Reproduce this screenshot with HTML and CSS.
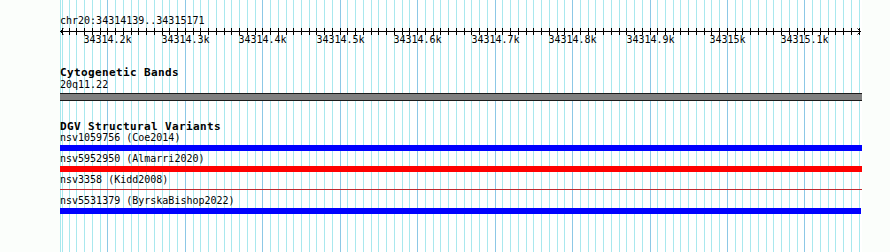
FILE: index.html
```html
<!DOCTYPE html>
<html lang="en">
<head>
    <meta charset="UTF-8">
    <title>chr20:34314139..34315171</title>
    <link rel="stylesheet" href="styles.css">
</head>
<body>
    <div class="view">
        <div class="grid"></div>
        <div class="ruler">
            <div class="location">chr20:34314139..34315171</div>
            <svg class="scale" width="802" height="7"></svg>
            <div class="ticklabels"></div>
        </div>
        <div class="track cyto">
            <div class="track-label">Cytogenetic Bands</div>
            <div class="feature-label">20q11.22</div>
            <div class="band"></div>
        </div>
        <div class="track dgv">
            <div class="track-label">DGV Structural Variants</div>
            <div class="row">
                <div class="feature-label">nsv1059756 (Coe2014)</div>
                <div class="bar gain"></div>
            </div>
            <div class="row">
                <div class="feature-label">nsv5952950 (Almarri2020)</div>
                <div class="bar loss"></div>
            </div>
            <div class="row">
                <div class="feature-label">nsv3358 (Kidd2008)</div>
                <div class="bar thin"></div>
            </div>
            <div class="row">
                <div class="feature-label">nsv5531379 (ByrskaBishop2022)</div>
                <div class="bar gain short"></div>
            </div>
        </div>
    </div>
    <script>
        // 10bp grid, 100bp major lines with labels
        const grid = document.querySelector('.grid');
        const scale = document.querySelector('.scale');
        const labels = document.querySelector('.ticklabels');
        const pxPerBp = 0.77444;

        function toX(bp){
            return Math.round(47.4 + (bp - 34314200) * pxPerBp);
        }

        let gridHtml = '<div class="line" style="left:0px"></div>';
        let svgHtml = '<rect x="0" y="3" width="801" height="1"></rect>';
        let labelHtml = '';

        for(let bp = 34314140; bp <= 34315170; bp += 10){
            let x = toX(bp);
            if(x < 2) x = 2;
            const major = bp % 100 === 0;
            gridHtml += `<div class="line${major ? ' major' : ''}" style="left:${x}px"></div>`;
            svgHtml += `<rect x="${x}" y="0" width="1" height="7"></rect>`;
            if(major){
                labelHtml += `<span style="left:${x + 0.5}px">${bp / 1000}k</span>`;
            }
        }

        svgHtml += '<path d="M3.5 0.5 L0.5 3.5 L3.5 6.5"></path>';
        svgHtml += '<path d="M797.5 0.5 L800.5 3.5 L797.5 6.5"></path>';

        grid.innerHTML = gridHtml;
        scale.innerHTML = svgHtml;
        labels.innerHTML = labelHtml;
    </script>
</body>
</html>
```

FILE: styles.css
```css
body{
    margin: 0;
    background-color: #fbfefb;
    font-family: "DejaVu Sans Mono", "Liberation Mono", monospace;
    font-size: 10px;
    color: #000;
}
.view{
    position: relative;
    margin-left: 60px;
    width: 802px;
    height: 252px;
    background-color: #fff;
    overflow: hidden;
}
.grid{
    position: absolute;
    top: 0;
    left: 0;
    right: 0;
    bottom: 0;
}
.grid .line{
    position: absolute;
    top: 0;
    bottom: 0;
    width: 1px;
    background-color: #a9e8ee;
}
.grid .line.major{
    background-color: #8cc8e6;
}
.ruler,.track{
    position: relative;
}

/* ruler */
.ruler{
    padding-top: 16px;
    height: 29px;
}
.location{
    line-height: 10px;
}
.scale{
    display: block;
    margin-top: 2px;
}
.scale rect{
    fill: #000;
}
.scale path{
    fill: none;
    stroke: #000;
    stroke-width: 1;
}
.ticklabels{
    position: relative;
    height: 10px;
    line-height: 10px;
}
.ticklabels span{
    position: absolute;
    top: 0;
    transform: translateX(-50%);
    white-space: nowrap;
}

/* tracks */
.track-label{
    font-weight: bold;
    font-size: 11px;
    letter-spacing: 0.38px;
    line-height: 12px;
}
.feature-label{
    line-height: 10px;
    white-space: nowrap;
}
.cyto{
    padding-top: 22px;
}
.cyto .feature-label{
    margin-top: 1px;
}
.band{
    box-sizing: border-box;
    height: 8px;
    margin-top: 3px;
    background-color: #808080;
    border-top: 1px solid #1a1a1a;
    border-bottom: 1px solid #1a1a1a;
}
.dgv{
    padding-top: 20px;
}
.dgv .row:first-of-type{
    margin-top: 2px;
}
.row{
    height: 21px;
}
.bar{
    height: 6px;
    margin-top: 2px;
}
.bar.gain{
    background-color: #0000ff;
}
.bar.loss{
    background-color: #ff0000;
}
.bar.thin{
    height: 1px;
    margin-top: 4px;
    background-color: #c0282d;
}
.bar.short{
    width: 801px;
}
```
